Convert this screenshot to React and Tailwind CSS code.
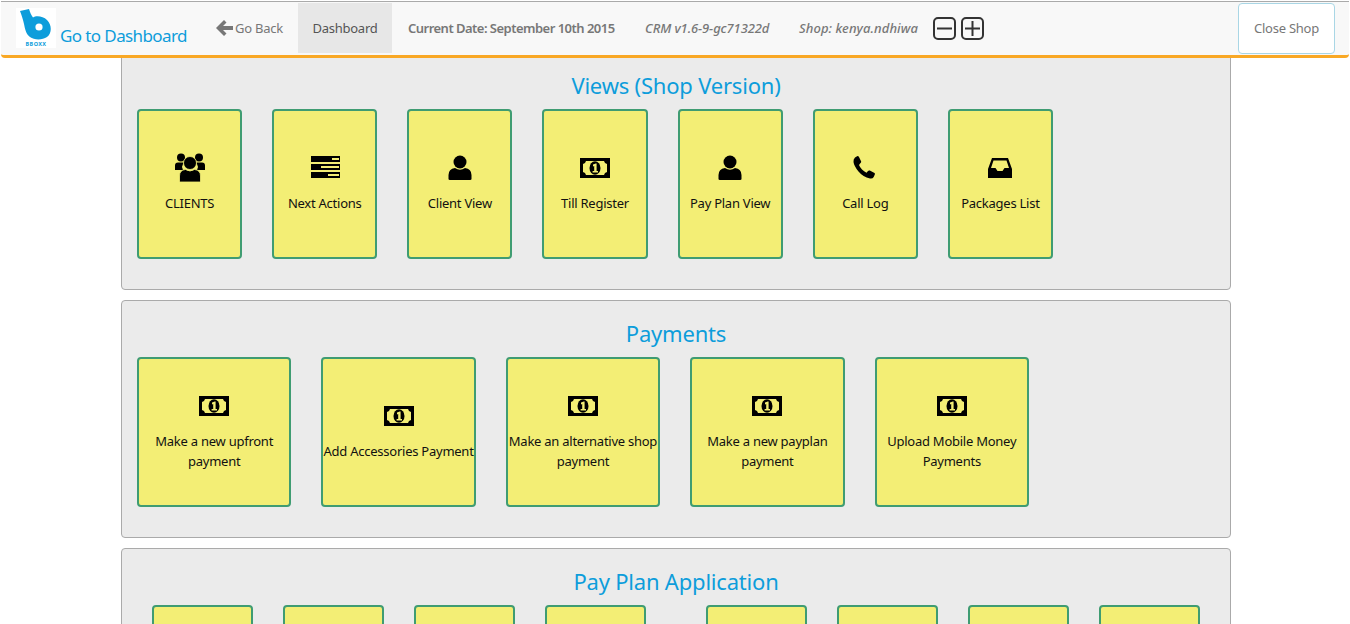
import React from "react";

const Money = () => (
  <svg width="30" height="20" viewBox="0 0 30 20">
    <path
      fillRule="evenodd"
      fill="#000"
      d="M0 0H30V20H0Z M6 3H24Q24.5 5.5 27 6V14Q24.5 14.5 24 17H6Q5.5 14.5 3 14V6Q5.5 5.5 6 3Z"
    />
    <ellipse cx="15" cy="10" rx="5.5" ry="6.8" fill="#000" />
    <path fill="#f3ee75" d="M13 6.5L15.8 5.5H16.6V13H18V14.5H12.6V13H14.2V8L13 8.5Z" />
  </svg>
);

const Users = () => (
  <svg width="30" height="30" viewBox="0 0 30 30">
    <circle cx="6" cy="4.5" r="4" />
    <circle cx="24" cy="4.5" r="4" />
    <path d="M0 17V12.5Q0 9.5 3 9.5H8.5L7 14L8 17Z" />
    <path d="M30 17V12.5Q30 9.5 27 9.5H21.5L23 14L22 17Z" />
    <circle cx="15" cy="10" r="6.5" stroke="#f3ee75" strokeWidth="0.8" />
    <path d="M4.5 29V23Q4.5 17 10.5 16.5Q15 19.5 19.5 16.5Q25.5 17 25.5 23V29Z" stroke="#f3ee75" strokeWidth="0.8" />
  </svg>
);

const Tasks = () => (
  <svg width="30" height="30" viewBox="0 0 30 30">
    <path
      fillRule="evenodd"
      d="M1 3H30V9H1Z M22 5V7H29V5Z M1 11H30V17H1Z M11 13V15H29V13Z M1 19H30V25H1Z M18 21V23H29V21Z"
    />
  </svg>
);

const User = () => (
  <svg width="30" height="30" viewBox="0 0 30 30">
    <circle cx="15" cy="9" r="6.5" />
    <path d="M3.5 26V22Q3.5 16 10 15Q15 18.5 20 15Q26.5 16 26.5 22V26Q26.5 27 25 27H5Q3.5 27 3.5 26Z" />
  </svg>
);

const Phone = () => (
  <svg width="30" height="30" viewBox="0 0 30 30">
    <path d="M5 4.5L7.5 3Q8.5 3 9 4L11.2 8.5Q11.2 9.5 10.5 10L9 12Q10 14.5 12 16.5Q14 18.5 16.5 19.8L18 18Q18.8 17.2 19.8 17.6L24.5 20Q25.3 20.6 24.8 21.6L23.7 24Q22.5 26 20 25.5Q13 24 8.5 18.5Q4 13 3.5 9Q3.2 6 5 4.5Z" />
  </svg>
);

const Inbox = () => (
  <svg width="30" height="30" viewBox="0 0 30 30">
    <path
      fillRule="evenodd"
      d="M7 5H23L27 16V25H3V16Z M8.5 7.5L6 15H10.5L12.5 18H17.5L19.5 15H24L21.5 7.5Z"
    />
  </svg>
);

const Arrow = () => (
  <svg width="17" height="16" viewBox="0 0 17 16" fill="#777">
    <path d="M8 0L10.5 2.5L7 6H17V10H7L10.5 13.5L8 16L0 8Z" />
  </svg>
);

const BoxIcon = ({ plus }) => (
  <svg width="23" height="23" viewBox="0 0 23 23" fill="none" stroke="#333" strokeWidth="2">
    <rect x="1" y="1" width="21" height="21" rx="4" />
    <path d="M4 11.5H19" />
    {plus && <path d="M11.5 4V19" />}
  </svg>
);

const Logo = () => (
  <div className="flex h-10 w-10 flex-col items-center bg-white">
    <svg width="40" height="32" viewBox="0 0 40 32" className="shrink-0">
      <path
        fill="#0d9ddb"
        d="M4 3L13 1C14 4 15 7 17 9.5C20 7.5 27 8 31 12C36 17 36 25 31 29C26 32.5 18 32 14 29C10 26 9 21 8 16C7 11 5.5 7 4 3Z"
      />
      <circle cx="23" cy="19" r="3.6" fill="#fff" />
    </svg>
    <span className="mt-px text-[5.5px] leading-[7px] font-bold tracking-[0.4px] text-[#0d9ddb]">BBOXX</span>
  </div>
);

const Card = ({ w, icon, label }) => (
  <div
    className={`flex h-[150px] shrink-0 flex-col items-center justify-center rounded border-2 border-[#3f9c72] bg-[#f3ee75] pb-[2px] text-center text-[13px] leading-5 tracking-[-0.25px] text-[#111] ${w}`}
  >
    {icon && <div className="mb-[10px] flex h-[30px] items-center justify-center">{icon}</div>}
    {label && <div>{label}</div>}
  </div>
);

const Panel = ({ title, children }) => (
  <section className="mb-[10px] h-[238px] rounded border border-[#aaa] bg-[#ebebeb] px-[15px]">
    <h2 className="h-[56px] pt-[16px] text-center text-[22px] leading-[32px] tracking-[-0.2px] text-[#0d9ddb]">{title}</h2>
    {children}
  </section>
);

const views = [
  ["CLIENTS", <Users />],
  ["Next Actions", <Tasks />],
  ["Client View", <User />],
  ["Till Register", <Money />],
  ["Pay Plan View", <User />],
  ["Call Log", <Phone />],
  ["Packages List", <Inbox />],
];

const payments = [
  "Make a new upfront payment",
  "Add Accessories Payment",
  "Make an alternative shop payment",
  "Make a new payplan payment",
  "Upload Mobile Money Payments",
];

export default function App() {
  return (
    <div className="h-screen overflow-hidden bg-white font-['Noto_Sans',sans-serif]">
      {/* fixed nav sits on top of the scrolled page */}
      <header className="fixed inset-x-0 top-0 z-10 mx-px mt-px flex h-[57px] items-stretch rounded-b border-t border-b-[3px] border-t-[#aaa] border-b-[#f9a825] bg-[#f8f8f8] pt-px text-[13px] tracking-[-0.25px] text-[#777]">
        <div className="flex w-[215px] items-start pl-[15px] pt-[5px]">
          <Logo />
          <span className="mt-[16px] ml-1 text-[17px] leading-6 tracking-[-0.6px] whitespace-nowrap text-[#0d9ddb]">Go to Dashboard</span>
        </div>
        <div className="flex h-[50px] w-[82px] items-center gap-[2px]">
          <Arrow />
          <span className="pt-[2px]">Go Back</span>
        </div>
        <div className="flex h-[50px] w-[94px] items-center justify-center bg-[#e7e7e7] pt-[2px] text-[#555]">Dashboard</div>
        <div className="ml-4 flex h-[50px] w-[237px] items-center pt-[2px] font-semibold tracking-[-0.52px] whitespace-nowrap">Current Date: September 10th 2015</div>
        <div className="flex h-[50px] w-[154px] items-center pt-[2px] font-medium tracking-[-0.1px] whitespace-nowrap italic">CRM v1.6-9-gc71322d</div>
        <div className="flex h-[50px] w-[134px] items-center pt-[2px] font-medium tracking-[0.08px] whitespace-nowrap italic">Shop: kenya.ndhiwa</div>
        <div className="flex h-[50px] items-center gap-[5px]">
          <BoxIcon />
          <BoxIcon plus />
        </div>
        <button className="mr-[14px] ml-auto h-[51px] w-[97px] rounded border border-[#a9d6e5] bg-white text-[#777]">Close Shop</button>
      </header>

      <main className="ml-[121px] w-[1110px] pt-[52px]">
        <Panel title="Views (Shop Version)">
          <div className="flex gap-[30px]">
            {views.map(([label, icon]) => (
              <Card key={label} w="w-[105.15px]" icon={icon} label={label} />
            ))}
          </div>
        </Panel>
        <Panel title="Payments">
          <div className="flex gap-[30px]">
            {payments.map((label) => (
              <Card key={label} w="w-[154.4px]" icon={<Money />} label={label} />
            ))}
          </div>
        </Panel>
        <Panel title="Pay Plan Application">
          <div className="grid grid-cols-2 gap-[30px]">
            {[0, 1].map((g) => (
              <div key={g} className="flex gap-[30px] px-[15px]">
                {[0, 1, 2, 3].map((i) => (
                  <Card key={i} w="w-[101px]" />
                ))}
              </div>
            ))}
          </div>
        </Panel>
      </main>
    </div>
  );
}
